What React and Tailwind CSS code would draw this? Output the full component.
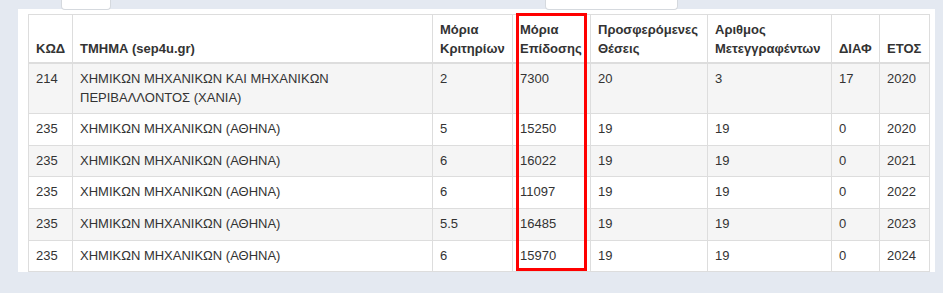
const rows = [
  { kod: '214', tmima: ['ΧΗΜΙΚΩΝ ΜΗΧΑΝΙΚΩΝ ΚΑΙ ΜΗΧΑΝΙΚΩΝ', 'ΠΕΡΙΒΑΛΛΟΝΤΟΣ (ΧΑΝΙΑ)'], kritiria: '2', epidosi: '7300', theseis: '20', meteg: '3', diaf: '17', etos: '2020' },
  { kod: '235', tmima: ['ΧΗΜΙΚΩΝ ΜΗΧΑΝΙΚΩΝ (ΑΘΗΝΑ)'], kritiria: '5', epidosi: '15250', theseis: '19', meteg: '19', diaf: '0', etos: '2020' },
  { kod: '235', tmima: ['ΧΗΜΙΚΩΝ ΜΗΧΑΝΙΚΩΝ (ΑΘΗΝΑ)'], kritiria: '6', epidosi: '16022', theseis: '19', meteg: '19', diaf: '0', etos: '2021' },
  { kod: '235', tmima: ['ΧΗΜΙΚΩΝ ΜΗΧΑΝΙΚΩΝ (ΑΘΗΝΑ)'], kritiria: '6', epidosi: '11097', theseis: '19', meteg: '19', diaf: '0', etos: '2022' },
  { kod: '235', tmima: ['ΧΗΜΙΚΩΝ ΜΗΧΑΝΙΚΩΝ (ΑΘΗΝΑ)'], kritiria: '5.5', epidosi: '16485', theseis: '19', meteg: '19', diaf: '0', etos: '2023' },
  { kod: '235', tmima: ['ΧΗΜΙΚΩΝ ΜΗΧΑΝΙΚΩΝ (ΑΘΗΝΑ)'], kritiria: '6', epidosi: '15970', theseis: '19', meteg: '19', diaf: '0', etos: '2024' },
];

const headers = [
  ['ΚΩΔ'],
  ['ΤΜΗΜΑ (sep4u.gr)'],
  ['Μόρια', 'Κριτηρίων'],
  ['Μόρια', 'Επίδοσης'],
  ['Προσφερόμενες', 'Θέσεις'],
  ['Αριθμος', 'Μετεγγραφέντων'],
  ['ΔΙΑΦ'],
  ['ΕΤΟΣ'],
];

function Lines({ lines }) {
  return lines.map((l, i) => (
    <span key={i}>
      {i > 0 && <br />}
      {l}
    </span>
  ));
}

export default function App() {
  const td = 'border border-[#dddddd] px-[7px] py-[6px] align-top whitespace-nowrap';
  return (
    <div
      className="relative w-[943px] h-[293px] overflow-hidden bg-[#e4e9f1] text-[13px] leading-[1.42857] text-[#333333]"
      style={{ fontFamily: '"Liberation Sans", Arial, sans-serif' }}
    >
      {/* bottom edges of the filter inputs above */}
      <div className="flex h-[9px]">
        <div className="ml-[61px] w-[50px] h-[10px] bg-white border border-t-0 border-[#d5d9de] rounded-b-[4px]" />
        <div className="ml-[434px] w-[133px] h-[10px] bg-white border border-t-0 border-[#d5d9de] rounded-b-[4px]" />
      </div>

      <div className="ml-[18px] w-[917px] h-[263px] bg-white pl-[10px] pr-[6px] pt-[5px] overflow-hidden">
        <table className="w-[901px] table-fixed border-collapse">
          <colgroup>
            <col className="w-[44px]" />
            <col className="w-[360px]" />
            <col className="w-[80px]" />
            <col className="w-[78px]" />
            <col className="w-[117px]" />
            <col className="w-[124px]" />
            <col className="w-[48px]" />
            <col className="w-[50px]" />
          </colgroup>
          <thead>
            <tr>
              {headers.map((h, i) => (
                <th
                  key={i}
                  className="border border-[#dddddd] border-b-2 px-[7px] pt-[6px] pb-[4px] text-left align-bottom font-bold whitespace-nowrap"
                >
                  <Lines lines={h} />
                </th>
              ))}
            </tr>
          </thead>
          <tbody>
            {rows.map((r, i) => (
              <tr key={i} className={i % 2 === 0 ? 'bg-[#f5f5f5]' : 'bg-white'}>
                <td className={td}>{r.kod}</td>
                <td className={td}>
                  <Lines lines={r.tmima} />
                </td>
                <td className={td}>{r.kritiria}</td>
                <td className={td}>{r.epidosi}</td>
                <td className={td}>{r.theseis}</td>
                <td className={td}>{r.meteg}</td>
                <td className={td}>{r.diaf}</td>
                <td className={td}>{r.etos}</td>
              </tr>
            ))}
          </tbody>
        </table>
      </div>

      {/* red highlight around the Μόρια Επίδοσης column */}
      <div className="absolute left-[516px] top-[13px] w-[71px] h-[258px] border-[3px] border-[#ff0000]" />
    </div>
  );
}
